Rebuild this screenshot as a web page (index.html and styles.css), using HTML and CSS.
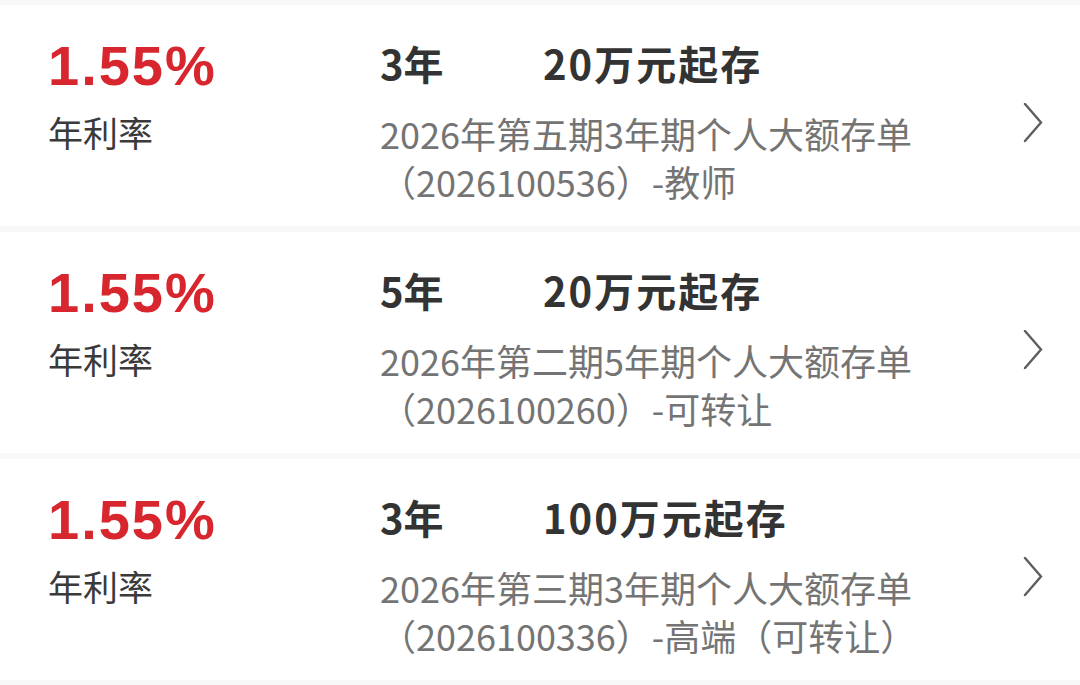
FILE: index.html
```html
<!DOCTYPE html>
<html lang="zh">
<head>
<meta charset="utf-8">
<link rel="stylesheet" href="styles.css">
</head>
<body>
<div class="list">
  <div class="card">
    <div class="rate-col">
      <div class="rate">1.55%</div>
      <div class="rate-label">年利率</div>
    </div>
    <div class="info">
      <div class="title"><span class="term">3年</span><span class="min">20万元起存</span></div>
      <div class="desc">2026年第五期3年期个人大额存单<br>（2026100536）-教师</div>
    </div>
    <svg class="chev" viewBox="0 0 20 40" width="20" height="40"><polyline points="2,1 18,19.5 2,38" /></svg>
  </div>
  <div class="card">
    <div class="rate-col">
      <div class="rate">1.55%</div>
      <div class="rate-label">年利率</div>
    </div>
    <div class="info">
      <div class="title"><span class="term">5年</span><span class="min">20万元起存</span></div>
      <div class="desc">2026年第二期5年期个人大额存单<br>（2026100260）-可转让</div>
    </div>
    <svg class="chev" viewBox="0 0 20 40" width="20" height="40"><polyline points="2,1 18,19.5 2,38" /></svg>
  </div>
  <div class="card">
    <div class="rate-col">
      <div class="rate">1.55%</div>
      <div class="rate-label">年利率</div>
    </div>
    <div class="info">
      <div class="title"><span class="term">3年</span><span class="min">100万元起存</span></div>
      <div class="desc">2026年第三期3年期个人大额存单<br>（2026100336）-高端（可转让）</div>
    </div>
    <svg class="chev" viewBox="0 0 20 40" width="20" height="40"><polyline points="2,1 18,19.5 2,38" /></svg>
  </div>
</div>
</body>
</html>
```
FILE: styles.css
```css
html, body {
  margin: 0;
  padding: 0;
  background: #f8f8f8;
  font-family: "Noto Sans CJK SC", "Noto Sans", sans-serif;
}
.list {
  display: flex;
  flex-direction: column;
  gap: 6px;
  padding-top: 5px;
}
.card {
  background: #ffffff;
  height: 221px;
  display: flex;
  align-items: flex-start;
  box-sizing: border-box;
  padding: 31px 0 0 48px;
}
.rate-col {
  width: 332px;
  flex: none;
}
.rate {
  font-family: "Liberation Sans", Arial, sans-serif;
  font-weight: bold;
  font-size: 56px;
  line-height: 60px;
  color: #d7262d;
  letter-spacing: 2px;
}
.rate-label {
  margin-top: 12px;
  font-size: 35px;
  line-height: 48px;
  color: #3a3a3a;
}
.info {
  flex: 1;
  margin-top: -3px;
}
.title {
  display: flex;
  font-size: 40px;
  line-height: 60px;
  font-weight: bold;
  color: #333333;
}
.term {
  width: 163px;
  flex: none;
}
.min {
  letter-spacing: 2px;
}
.desc {
  margin-top: 16px;
  font-size: 36px;
  line-height: 48px;
  color: #747474;
}
.chev {
  flex: none;
  margin: 67px 37px 0 0;
  fill: none;
  stroke: #5e5e5e;
  stroke-width: 2.4;
  stroke-linecap: round;
  stroke-linejoin: miter;
}
```
